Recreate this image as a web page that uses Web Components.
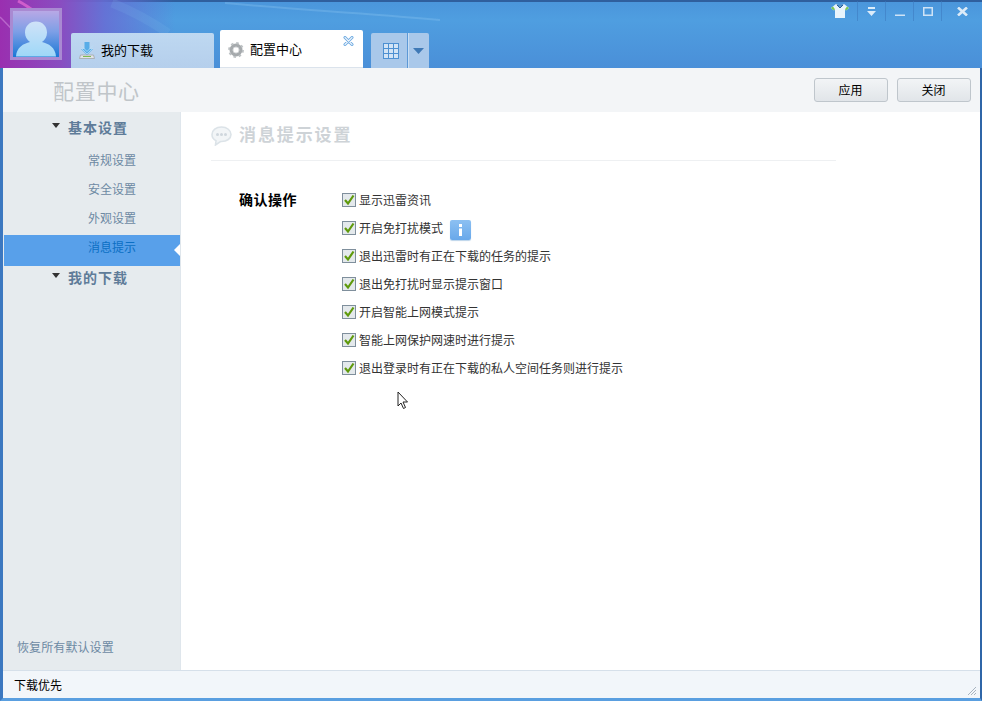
<!DOCTYPE html>
<html lang="zh-CN">
<head>
<meta charset="utf-8">
<title>配置中心</title>
<style>
    html, body { margin: 0; padding: 0; width: 982px; height: 701px; overflow: hidden; background: #fff; }
    body { font-family: "Liberation Sans", "Noto Sans CJK SC", sans-serif; font-size: 12px; }
</style>
</head>
<body>
<app-window></app-window>

<script>
const CHECK_ITEMS = [
    { text: '显示迅雷资讯' },
    { text: '开启免打扰模式', info: true },
    { text: '退出迅雷时有正在下载的任务的提示' },
    { text: '退出免打扰时显示提示窗口' },
    { text: '开启智能上网模式提示' },
    { text: '智能上网保护网速时进行提示' },
    { text: '退出登录时有正在下载的私人空间任务则进行提示' }
];

class TitleBar extends HTMLElement {
    constructor() {
        super();
        this.attachShadow({ mode: 'open' });
    }

    connectedCallback() {
        this.shadowRoot.innerHTML = `
            <style>
                :host {
                    display: flex;
                    align-items: flex-end;
                    position: relative;
                    height: 65px;
                    padding: 3px 0 0 10px;
                    overflow: hidden;
                    background: linear-gradient(180deg, #4a95db 0%, #4f9ee0 30%, #4a8fd8 100%);
                    box-shadow: inset 0 2px 0 #2f5f9e;
                }
                .glow {
                    position: absolute; left: 0; top: 0; width: 175px; height: 68px;
                    background: linear-gradient(90deg, #9a2fb0 0%, #8a4cc0 34%, rgba(104,108,212,.85) 60%, rgba(74,149,219,0) 100%);
                }
                .streak { position: absolute; left: 0; top: 0; }
                .avatar {
                    position: relative; width: 52px; height: 52px; box-sizing: border-box;
                    margin-bottom: 8px; margin-right: 9px; flex: none;
                    border: 3px solid #a98ad2;
                    background: linear-gradient(180deg, #b8a8e6 0%, #7d9fe6 45%, #1a78d6 100%);
                }
                .avatar svg { display: block; }
                .tab {
                    position: relative; display: flex; align-items: center; box-sizing: border-box;
                    height: 35px; width: 143px; padding-bottom: 3px; border-radius: 2px 2px 0 0;
                    background: linear-gradient(180deg, #bed8f1, #b5cfec);
                    font-size: 13px; color: #000; flex: none;
                }
                .tab svg { margin-top: 2px; }
                .tab.active { height: 38px; margin-left: 6px; padding: 0; background: #fff; border-bottom: 1px solid #dbe3ec; }
                .tab svg { flex: none; margin-left: 8px; margin-right: 6px; }
                .close { position: absolute; right: 9px; top: 6px; margin: 0 !important; }
                .apps {
                    display: flex; height: 35px; margin-left: 8px; flex: none;
                    border-radius: 2px 2px 0 0; background: #a9c8ea;
                }
                .apps div { display: flex; align-items: center; justify-content: center; box-sizing: border-box; }
                .apps .grid { width: 37px; padding-left: 3px; border-right: 1px solid #5c98d6; }
                .apps .drop { width: 21px; padding-right: 1px; border-left: 1px solid #c9def3; }
                .controls { position: absolute; right: 0; top: 1px; display: flex; height: 20px; }
                .controls div { width: 28px; box-sizing: border-box; display: flex; align-items: center; justify-content: center; border-left: 1px solid rgba(60,120,190,.55); }
                .controls div:first-child { width: 34px; border-left: 0; }
                .controls div:last-child { width: 41px; }
            </style>
            <div class="glow"></div>
            <svg class="streak" width="460" height="68" viewBox="0 0 460 68" fill="none">
                <path d="M0 17 C10 27 20 38 32 50" stroke="#d99ae6" stroke-width="1.500" opacity=".5"/>
                <path d="M18 1 C24 4 30 8 38 14" stroke="#f070d8" stroke-width="3" opacity=".65"/>
                <path d="M112 3 C135 12 152 22 168 33" stroke="#8cc6f2" stroke-width="9" opacity=".13"/>
                <path d="M225 3 C300 10 350 12 440 20" stroke="#a0d2f6" stroke-width="2" opacity=".25"/>
            </svg>
            <div class="avatar">
                <svg width="46" height="46" viewBox="0 0 46 46">
                    <defs>
                        <linearGradient id="p" x1="0" y1="0" x2="0" y2="1"><stop offset="0" stop-color="#cfe2f8"/><stop offset="1" stop-color="#9ed8f8"/></linearGradient>
                    </defs>
                    <path fill="url(#p)" d="M23 10.500c-6.500 0-11 4.700-11 11 0 4.300 2 7.500 5 9.500-6.500 1.500-13.500 5.500-14 14.500h40c-.5-9-7.500-13-14-14.500 3-2 5-5.200 5-9.500 0-6.300-4.500-11-11-11z"/>
                </svg>
            </div>
            <div class="tab">
                <svg width="16" height="17" viewBox="0 0 16 17">
                    <path d="M5.500 0h5v7H14l-6 6-6-6h3.500z" fill="#58ade8"/>
                    <path d="M2 3.500l6 6 6-6M2 6l6 6 6-6" fill="none" stroke="#b8e0f8" stroke-width=".8"/>
                    <path d="M1.500 13h13l1 3.500H.5z" fill="#e2e4e6" stroke="#a2a6aa" stroke-width=".8"/>
                    <path d="M4 14.500h8" stroke="#7cbc50" stroke-width="1"/>
                </svg>
                <span>我的下载</span>
            </div>
            <div class="tab active">
                <svg width="16" height="16" viewBox="0 0 16 16">
                    <circle cx="8" cy="8" r="4.800" fill="none" stroke="#a6aaad" stroke-width="3.400"/>
                    <circle cx="8" cy="8" r="7" fill="none" stroke="#bcc0c3" stroke-width="1.800" stroke-dasharray="2.600 2.900"/>
                    <circle cx="8" cy="8" r="3" fill="none" stroke="#d8dadc" stroke-width="1"/>
                </svg>
                <span>配置中心</span>
                <svg class="close" width="11" height="10" viewBox="0 0 11 10">
                    <path d="M2 1.500l7 7M9 1.500l-7 7" stroke="#6aa8e0" stroke-width="3" stroke-linecap="round"/>
                    <path d="M2 1.500l7 7M9 1.500l-7 7" stroke="#eaf3fc" stroke-width="1.200" stroke-linecap="round"/>
                </svg>
            </div>
            <div class="apps">
                <div class="grid">
                    <svg width="16" height="16" viewBox="0 0 16 16" fill="none" stroke="#4d90d2" stroke-width="1" shape-rendering="crispEdges">
                        <rect x=".5" y=".5" width="15" height="15" fill="#d2e4f6"/>
                        <path d="M5.500 0v16M10.500 0v16M0 5.500h16M0 10.500h16"/>
                    </svg>
                </div>
                <div class="drop">
                    <svg width="11" height="6" viewBox="0 0 11 6"><path d="M0 0h11L5.500 6z" fill="#3f79b6"/></svg>
                </div>
            </div>
            <div class="controls">
                <div><svg width="18" height="14" viewBox="0 0 18 14">
                    <path d="M5 0l4 1.500L13 0l5 4-3 2.500-1-1V14H4V5.500l-1 1L0 4z" fill="#e8f4fc"/>
                    <path d="M0 4l3 2.500 1-1.200L2 2.500zM18 4l-3 2.500-1-1.200 2-2.800z" fill="#7ec850"/>
                    <path d="M5 0l4 3 4-3-4 1.500z" fill="#2e6fb0"/>
                    <path d="M6 1l3 3 3-3" fill="none" stroke="#1f5f9e" stroke-width="1"/>
                </svg></div>
                <div><svg width="9" height="9" viewBox="0 0 9 9"><path d="M1 0h7v2H1z M0 4h9L4.500 9z" fill="#dcecfa"/></svg></div>
                <div><svg width="10" height="10" viewBox="0 0 10 10"><path d="M0 8.500h10v1.500H0z" fill="#cfe3f6"/></svg></div>
                <div><svg width="10" height="9" viewBox="0 0 10 9"><rect x=".75" y=".75" width="8.500" height="7.500" fill="none" stroke="#cfe3f6" stroke-width="1.500"/></svg></div>
                <div><svg width="11" height="9" viewBox="0 0 11 9"><path d="M1 .5l9 8M10 .5l-9 8" stroke="#dcebf8" stroke-width="2.600"/></svg></div>
            </div>
        `;
    }
}

class ToolBar extends HTMLElement {
    constructor() {
        super();
        this.attachShadow({ mode: 'open' });
    }

    connectedCallback() {
        this.shadowRoot.innerHTML = `
            <style>
                :host {
                    display: flex; align-items: center; height: 44px; box-sizing: border-box;
                    padding: 0 9px 1px 50px; background: #f3f5f7;
                }
                h1 { flex: 1; margin: 0; font-size: 21px; font-weight: 400; letter-spacing: .7px; color: #c0c5c9; }
                button {
                    width: 74px; height: 24px; margin-left: 9px; padding: 0 1px 0 0;
                    font: inherit; color: #000;
                    border: 1px solid #bfc6cc; border-radius: 3px;
                    background: linear-gradient(180deg, #f2f4f6, #e1e5e9);
                }
            </style>
            <h1>配置中心</h1>
            <button>应用</button>
            <button>关闭</button>
        `;
    }
}

class SideNav extends HTMLElement {
    constructor() {
        super();
        this.attachShadow({ mode: 'open' });
    }

    connectedCallback() {
        const arrow = '<svg width="8" height="5" viewBox="0 0 8 5"><path d="M0 0h8L4 5z" fill="#333"/></svg>';
        this.shadowRoot.innerHTML = `
            <style>
                :host {
                    display: flex; flex-direction: column; width: 178px; flex: none;
                    box-sizing: border-box;
                    background: #e6ebee; border-right: 1px solid #dfe6ec;
                    color: #6d89a3;
                }
                .group { display: flex; align-items: center; height: 30px; padding-left: 49px; font-size: 14px; font-weight: 700; letter-spacing: 1px; color: #5f7c99; }
                .group svg { margin-right: 8px; margin-top: -3px; }
                .group.next { height: 22px; }
                .list { padding-top: 5px; }
                .item { height: 29px; line-height: 29px; padding-left: 85px; }
                .item.on { position: relative; height: 31px; line-height: 27px; margin: 1px 0 0 1px; padding-left: 84px; background: #58a0ea; color: #0b6fc4; }
                .item.on::after {
                    content: ''; position: absolute; right: 0; top: 9px;
                    border: 6px solid transparent; border-left: 0; border-right: 6px solid #fff;
                }
                .reset { margin-top: auto; padding: 0 0 15px 14px; letter-spacing: .1px; }
            </style>
            <div class="group">${arrow}基本设置</div>
            <div class="list">
                <div class="item">常规设置</div>
                <div class="item">安全设置</div>
                <div class="item">外观设置</div>
                <div class="item on">消息提示</div>
            </div>
            <div class="group next">${arrow}我的下载</div>
            <div class="reset">恢复所有默认设置</div>
        `;
    }
}

class CheckRow extends HTMLElement {
    constructor() {
        super();
        this.attachShadow({ mode: 'open' });
    }

    connectedCallback() {
        this.shadowRoot.innerHTML = `
            <style>
                :host { display: flex; align-items: center; height: 28px; color: #333; }
                .box {
                    width: 14px; height: 14px; box-sizing: border-box; margin-right: 3px; flex: none;
                    border: 1px solid #7f8f9c; background: #e4e9ec;
                }
                .box svg { display: block; }
                span { margin-top: -2px; }
                ::slotted(info-badge) { margin: 4px 0 0 7px; }
            </style>
            <div class="box">
                <svg width="12" height="12" viewBox="0 0 12 12"><path d="M2 6l3 3.500L10.500 1.500" fill="none" stroke="#5f9a0c" stroke-width="2.200"/></svg>
            </div>
            <span><slot></slot></span>
            <slot name="extra"></slot>
        `;
    }
}

class InfoBadge extends HTMLElement {
    constructor() {
        super();
        this.attachShadow({ mode: 'open' });
    }

    connectedCallback() {
        this.shadowRoot.innerHTML = `
            <style>
                :host {
                    display: flex; align-items: center; justify-content: center;
                    width: 21px; height: 20px; border-radius: 2px;
                    background: linear-gradient(180deg, #8cc0f2, #68a8ea);
                    box-shadow: 0 1px 1px #bcd4ea;
                }
            </style>
            <svg width="5" height="12" viewBox="0 0 5 12"><path d="M1 0h3v3H1zM1 4.500h3V12H1z" fill="#fff"/></svg>
        `;
    }
}

class MessagePanel extends HTMLElement {
    constructor() {
        super();
        this.attachShadow({ mode: 'open' });
    }

    connectedCallback() {
        this.shadowRoot.innerHTML = `
            <style>
                :host { display: block; position: relative; flex: 1; box-sizing: border-box; padding: 12px 0 0 30px; background: #fff; }
                header {
                    display: flex; align-items: center; width: 625px; height: 37px; box-sizing: border-box;
                    padding-bottom: 18px; border-bottom: 1px solid #eef0f2;
                    font-size: 17px; font-weight: 700; letter-spacing: 1.900px; color: #ced3d7;
                }
                header svg { margin-right: 7px; margin-top: 5px; }
                .section { display: flex; margin-top: 25px; padding-left: 28px; }
                .label { width: 103px; flex: none; height: 28px; line-height: 28px; font-size: 14px; font-weight: 700; letter-spacing: .5px; color: #000; }
                .cursor { position: absolute; left: 216px; top: 279px; }
            </style>
            <header>
                <svg width="21" height="20" viewBox="0 0 21 20">
                    <path d="M10.500 1C5 1 1 4.300 1 8.500c0 2.700 1.700 5 4 6.300L4.500 19l5-3.500h1c5.500 0 9.500-3 9.500-7S16 1 10.500 1z" fill="#f2f5f7" stroke="#dce3e8" stroke-width="1.600"/>
                    <circle cx="6.500" cy="8.500" r="1.500" fill="#cfd7dd"/><circle cx="10.500" cy="8.500" r="1.500" fill="#cfd7dd"/><circle cx="14.500" cy="8.500" r="1.500" fill="#cfd7dd"/>
                </svg>
                消息提示设置
            </header>
            <div class="section">
                <div class="label">确认操作</div>
                <div class="list">
                    ${CHECK_ITEMS.map(item => `
                        <check-row>${item.text}${item.info ? '<info-badge slot="extra"></info-badge>' : ''}</check-row>
                    `).join('')}
                </div>
            </div>
            <svg class="cursor" width="12" height="19" viewBox="0 0 12 19">
                <path d="M1 1v14l3-3 2.500 5.500 2-1L6 11h4.500z" fill="#fff" stroke="#222" stroke-width="1"/>
            </svg>
        `;
    }
}

class StatusBar extends HTMLElement {
    constructor() {
        super();
        this.attachShadow({ mode: 'open' });
    }

    connectedCallback() {
        this.shadowRoot.innerHTML = `
            <style>
                :host {
                    display: flex; align-items: center; justify-content: space-between;
                    height: 28px; box-sizing: border-box; padding: 0 3px 0 11px;
                    background: #f2f6fa; border-top: 1px solid #d6e0ea; color: #000;
                }
                svg { margin-top: 12px; }
            </style>
            <span>下载优先</span>
            <svg width="10" height="10" viewBox="0 0 10 10" stroke="#a8b4c0" stroke-width="1"><path d="M9 1L1 9M9 4L4 9M9 7L7 9"/></svg>
        `;
    }
}

class AppWindow extends HTMLElement {
    constructor() {
        super();
        this.attachShadow({ mode: 'open' });
    }

    connectedCallback() {
        this.shadowRoot.innerHTML = `
            <style>
                :host {
                    display: flex; flex-direction: column; width: 982px; height: 701px; box-sizing: border-box;
                    border-left: 3px solid #3c78c0; border-right: 2px solid #2f66a8; border-bottom: 3px solid #5a9fe0;
                    background: #fff;
                }
                title-bar { margin-left: -3px; margin-right: -2px; }
                .body { flex: 1; display: flex; min-height: 0; }
            </style>
            <title-bar></title-bar>
            <tool-bar></tool-bar>
            <div class="body">
                <side-nav></side-nav>
                <message-panel></message-panel>
            </div>
            <status-bar></status-bar>
        `;
    }
}

customElements.define('title-bar', TitleBar);
customElements.define('tool-bar', ToolBar);
customElements.define('side-nav', SideNav);
customElements.define('check-row', CheckRow);
customElements.define('info-badge', InfoBadge);
customElements.define('message-panel', MessagePanel);
customElements.define('status-bar', StatusBar);
customElements.define('app-window', AppWindow);
</script>
</body>
</html>
